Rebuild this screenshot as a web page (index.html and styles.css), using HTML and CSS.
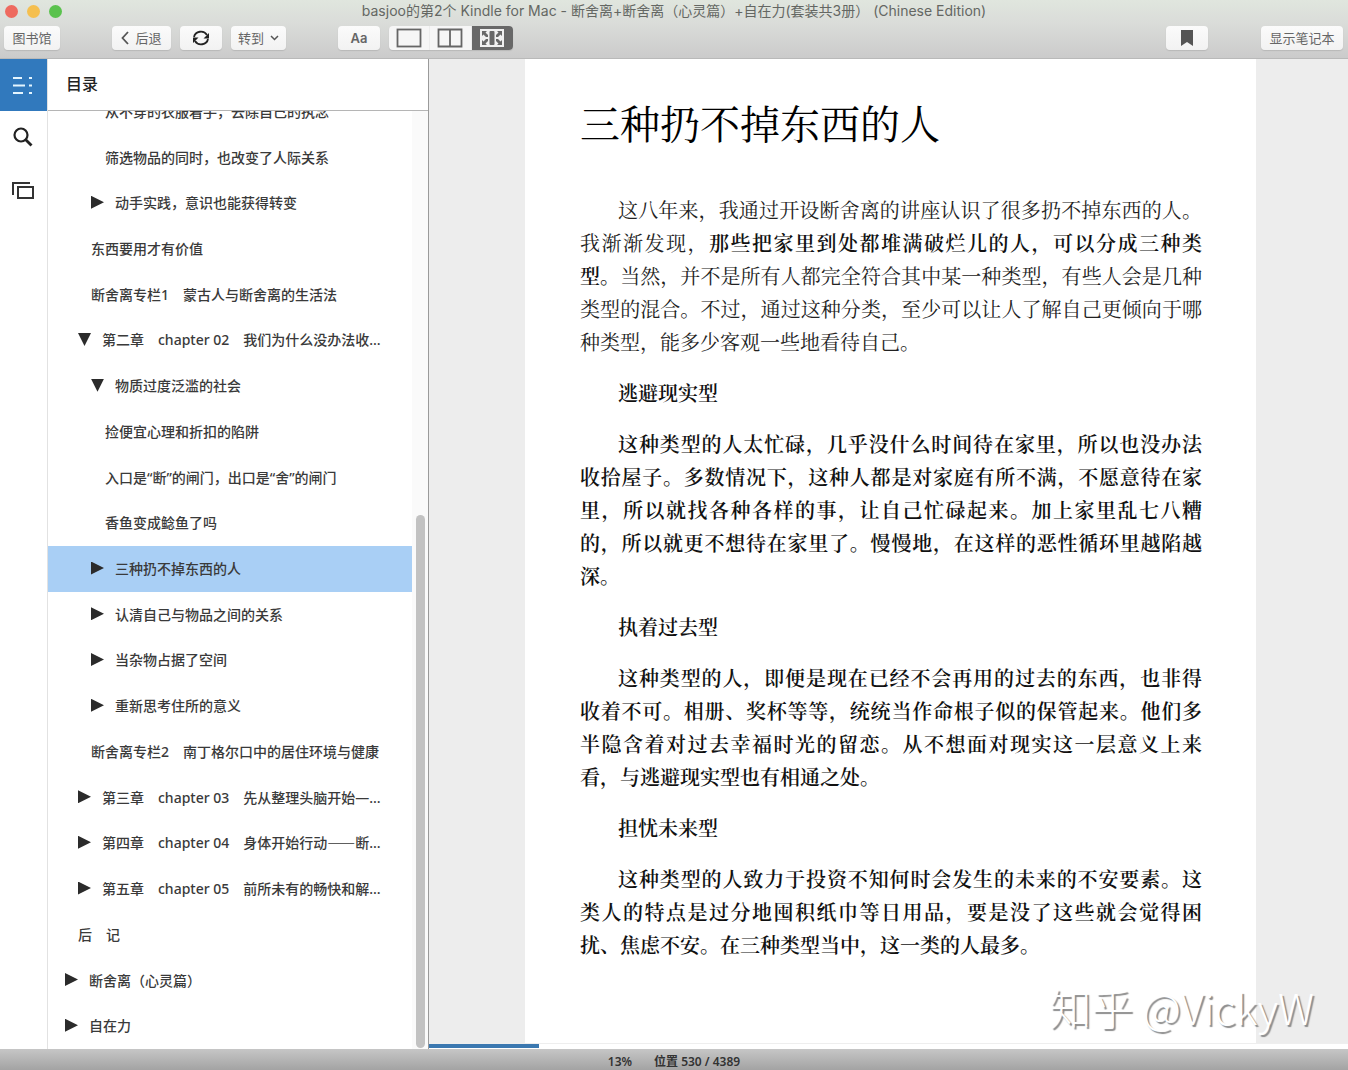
FILE: index.html
```html
<!DOCTYPE html>
<html lang="zh-CN">
<head>
<meta charset="utf-8">
<meta name="viewport" content="width=device-width, initial-scale=1">
<title>Kindle for Mac</title>
<link rel="stylesheet" href="styles.css">
</head>
<body>
<div class="app">
  <header class="chrome">
    <div class="titlebar">
      <div class="lights"><span class="light close"></span><span class="light minimise"></span><span class="light zoom"></span></div>
      <div class="window-title">basjoo的第2个 Kindle for Mac - 断舍离+断舍离（心灵篇）+自在力(套装共3册） (Chinese Edition)</div>
    </div>
    <div class="toolbar">
      <button class="btn library">图书馆</button>
      <div class="group nav">
        <button class="btn back"><svg width="8" height="14" viewBox="0 0 8 14"><path d="M7 1 1.500 7 7 13" fill="none" stroke="#555" stroke-width="1.800"/></svg>后退</button>
        <button class="btn square" aria-label="同步"><svg width="18" height="18" viewBox="0 0 18 18"><g fill="none" stroke="#222" stroke-width="1.800"><path d="M2 8A7 6.500 0 0 1 15 6"/><path d="M16 10A7 6.500 0 0 1 3 12"/></g><path d="M17 4v5.500h-5.500zM1 14V8.500h5.500z" fill="#222"/></svg></button>
        <button class="btn goto">转到<svg width="9" height="6" viewBox="0 0 9 6"><path d="M1 1 4.500 4.500 8 1" fill="none" stroke="#555" stroke-width="1.500"/></svg></button>
      </div>
      <div class="group">
        <button class="btn square font">Aa</button>
        <div class="segmented">
          <button class="seg" aria-label="单栏"><svg width="26" height="20" viewBox="0 0 26 20"><rect x="1.500" y="1.500" width="23" height="17" fill="none" stroke="#666" stroke-width="1.800"/></svg></button>
          <button class="seg" aria-label="双栏"><svg width="26" height="20" viewBox="0 0 26 20"><path d="M1.500 1.500h23v17h-23zM13 1v18" fill="none" stroke="#666" stroke-width="1.800"/></svg></button>
          <button class="seg active" aria-label="自动分栏"><svg width="26" height="20" viewBox="0 0 26 20"><rect x="1" y="1" width="24" height="18" fill="#f0f0f0"/><g fill="#686868"><rect x="10.500" y="3" width="5" height="14" rx="1"/><path d="M3 3h5L6.500 4.500 9 7v2H7L4.500 6.500 3 8zM23 3h-5l1.500 1.500L17 7v2h2l2.500-2.500L23 8zM3 17h5l-1.500-1.500L9 13v-2H7l-2.500 2.500L3 12zM23 17h-5l1.500-1.500L17 13v-2h2l2.500 2.500L23 12z"/></g></svg></button>
        </div>
      </div>
      <div class="group right">
        <button class="btn square" aria-label="书签"><svg width="12" height="16" viewBox="0 0 12 16"><path d="M0 0h12v16l-6-4-6 4z" fill="#555"/></svg></button>
        <button class="btn notes">显示笔记本</button>
      </div>
    </div>
  </header>

  <div class="body">
    <nav class="rail">
      <button class="rail-btn active" aria-label="目录"><svg width="22" height="18" viewBox="0 0 22 18"><path d="M1 2h9M1 9.500h12M1 17h10M17 2h3M17 9.500h3M17 17h3" stroke="#e4f5ff" stroke-width="2.200"/></svg></button>
      <button class="rail-btn" aria-label="搜索"><svg width="20" height="20" viewBox="0 0 20 20"><circle cx="8" cy="8" r="6.500" fill="none" stroke="#222" stroke-width="2.200"/><path d="m12.500 12.500 6 6" stroke="#222" stroke-width="2.800"/></svg></button>
      <button class="rail-btn" aria-label="卡片"><svg width="22" height="18" viewBox="0 0 22 18"><path d="M1 14V2h17M6 6h15v11H6z" fill="none" stroke="#333" stroke-width="2"/></svg></button>
    </nav>

    <aside class="sidebar">
      <h2 class="sidebar-title">目录</h2>
      <div class="toc-wrap">
        <div class="toc-clip">
        <ul class="toc">
          <li><a class="l3" href="#">从不穿的衣服着手，去除自己的执念</a></li>
          <li><a class="l3" href="#">筛选物品的同时，也改变了人际关系</a></li>
          <li><a class="l2 closed" href="#">动手实践，意识也能获得转变</a></li>
          <li><a class="l2" href="#">东西要用才有价值</a></li>
          <li><a class="l2" href="#">断舍离专栏1　蒙古人与断舍离的生活法</a></li>
          <li><a class="l1 open" href="#">第二章　chapter 02　我们为什么没办法收…</a></li>
          <li><a class="l2 open" href="#">物质过度泛滥的社会</a></li>
          <li><a class="l3" href="#">捡便宜心理和折扣的陷阱</a></li>
          <li><a class="l3" href="#">入口是“断”的闸门，出口是“舍”的闸门</a></li>
          <li><a class="l3" href="#">香鱼变成鲶鱼了吗</a></li>
          <li><a class="l2 closed current" href="#">三种扔不掉东西的人</a></li>
          <li><a class="l2 closed" href="#">认清自己与物品之间的关系</a></li>
          <li><a class="l2 closed" href="#">当杂物占据了空间</a></li>
          <li><a class="l2 closed" href="#">重新思考住所的意义</a></li>
          <li><a class="l2" href="#">断舍离专栏2　南丁格尔口中的居住环境与健康</a></li>
          <li><a class="l1 closed" href="#">第三章　chapter 03　先从整理头脑开始—…</a></li>
          <li><a class="l1 closed" href="#"><span>第四章　chapter 04　身体开始行动<span class="dash">——</span>断…</span></a></li>
          <li><a class="l1 closed" href="#">第五章　chapter 05　前所未有的畅快和解…</a></li>
          <li><a class="l1" href="#">后　记</a></li>
          <li><a class="l0 closed" href="#">断舍离（心灵篇）</a></li>
          <li><a class="l0 closed" href="#">自在力</a></li>
        </ul>
        </div>
        <div class="scrollbar"><span class="thumb"></span></div>
      </div>
    </aside>

    <main class="reader">
      <div class="spread">
        <article class="page">
          <h1>三种扔不掉东西的人</h1>
          <p><span class="line first">这八年来，我通过开设断舍离的讲座认识了很多扔不掉东西的人。</span><span class="line">我渐渐发现，<b>那些把家里到处都堆满破烂儿的人，可以分成三种类</b></span><span class="line"><b>型。</b>当然，并不是所有人都完全符合其中某一种类型，有些人会是几种</span><span class="line">类型的混合。不过，通过这种分类，至少可以让人了解自己更倾向于哪</span><span class="line last">种类型，能多少客观一些地看待自己。</span></p>
          <h3>逃避现实型</h3>
          <p class="strong"><span class="line first">这种类型的人太忙碌，几乎没什么时间待在家里，所以也没办法</span><span class="line">收拾屋子。多数情况下，这种人都是对家庭有所不满，不愿意待在家</span><span class="line">里，所以就找各种各样的事，让自己忙碌起来。加上家里乱七八糟</span><span class="line">的，所以就更不想待在家里了。慢慢地，在这样的恶性循环里越陷越</span><span class="line last">深。</span></p>
          <h3>执着过去型</h3>
          <p class="strong"><span class="line first">这种类型的人，即便是现在已经不会再用的过去的东西，也非得</span><span class="line">收着不可。相册、奖杯等等，统统当作命根子似的保管起来。他们多</span><span class="line">半隐含着对过去幸福时光的留恋。从不想面对现实这一层意义上来</span><span class="line last">看，与逃避现实型也有相通之处。</span></p>
          <h3>担忧未来型</h3>
          <p class="strong"><span class="line first">这种类型的人致力于投资不知何时会发生的未来的不安要素。这</span><span class="line">类人的特点是过分地囤积纸巾等日用品，要是没了这些就会觉得困</span><span class="line last">扰、焦虑不安。在三种类型当中，这一类的人最多。</span></p>
        </article>
      </div>
      <div class="progress"><span class="progress-fill"></span></div>
      <div class="watermark">知乎 @VickyW</div>
    </main>
  </div>

  <footer class="status"><span>13%</span><span>位置 530 / 4389</span></footer>
</div>
</body>
</html>
```
FILE: styles.css
```css
* { box-sizing: border-box; }

body {
  margin: 0;
  font-family: "Noto Sans", "Noto Sans CJK SC", sans-serif;
  color: #333;
}

button {
  border: 0;
  padding: 0;
  font: inherit;
  color: inherit;
}

.app {
  display: flex;
  flex-direction: column;
  height: 100vh;
  min-height: 1000px;
  background: #fff;
}

/* window chrome */
.chrome {
  flex: none;
  height: 59px;
  background: linear-gradient(#e0e6de, #dadcd9 40%, #cbcbcb);
  border-bottom: 1px solid #b9b9b9;
  font-family: Inter, "Noto Sans CJK SC", sans-serif;
}

.titlebar {
  display: grid;
  grid-template-columns: 1fr auto 1fr;
  align-items: center;
  height: 22px;
  padding: 0 5px;
}

.lights { display: flex; gap: 9px; }
.light { width: 13px; height: 13px; border-radius: 50%; }
.close { background: #ee6a5f; }
.minimise { background: #f5bf4f; }
.zoom { background: #5ac24d; }

.window-title {
  font-size: 14px;
  line-height: 22px;
  color: #646763;
  white-space: nowrap;
}

.toolbar {
  display: flex;
  align-items: center;
  gap: 52px;
  padding: 4px 5px 0 4px;
}

.group { display: flex; gap: 9px; }
.right { margin-left: auto; gap: 53px; }

.btn {
  display: flex;
  align-items: center;
  justify-content: center;
  gap: 6px;
  height: 24px;
  border-radius: 4px;
  background: linear-gradient(#fbfbfb, #f2f2f2);
  box-shadow: 0 1px 1px #b8b8b8;
  font-size: 13px;
  line-height: 24px;
  color: #666;
  white-space: nowrap;
}

.library { width: 56px; }
.back { width: 59px; }
.square { width: 42px; }
.goto { width: 55px; }
.notes { width: 82px; }
.font { font-weight: 600; }

.segmented {
  display: grid;
  grid-template-columns: repeat(3, 1fr);
  width: 124px;
  height: 24px;
  border-radius: 4px;
  overflow: hidden;
  background: #f6f6f6;
  box-shadow: 0 1px 1px #b8b8b8;
}

.seg {
  display: flex;
  align-items: center;
  justify-content: center;
  background: none;
  border-right: 1px solid #ececec;
}

.seg.active { background: #686868; border: 0; }

/* main area */
.body {
  flex: 1;
  min-height: 0;
  display: grid;
  grid-template-columns: 48px 381px 1fr;
}

.rail { border-right: 1px solid #e2e2e2; }

.rail-btn {
  display: flex;
  align-items: center;
  justify-content: center;
  width: 100%;
  height: 53px;
  padding: 0 2px 2px 0;
  background: none;
}

.rail-btn.active { height: 52px; padding-bottom: 0; background: #3179bd; }

.sidebar {
  display: flex;
  flex-direction: column;
  min-height: 0;
  border-right: 1px solid #9a9a9a;
}

.sidebar-title {
  flex: none;
  margin: 0;
  height: 52px;
  padding-left: 18px;
  border-bottom: 1px solid #b5b5b5;
  font-size: 16px;
  font-weight: 500;
  line-height: 50px;
  color: #222;
}

.toc-wrap {
  flex: 1;
  min-height: 0;
  display: grid;
  grid-template-columns: 1fr 16px;
}

.toc-clip {
  display: flex;
  min-height: 0;
  overflow: hidden;
}

/* scrolled part-way: the first row is half under the heading */
.toc {
  flex: 1;
  display: flex;
  flex-direction: column;
  min-width: 0;
  margin: -22px 0 0;
  padding: 0;
  list-style: none;
}

.toc li { flex: 1; display: flex; min-height: 0; }

.toc a {
  flex: 1;
  display: flex;
  align-items: center;
  gap: 11px;
  padding-bottom: 2px;
  font-size: 14px;
  font-weight: 500;
  color: #3a3a3a;
  text-decoration: none;
  white-space: nowrap;
}

.l0 { padding-left: 17px; }
.l1 { padding-left: 30px; }
.l2 { padding-left: 43px; }
.l3 { padding-left: 57px; }

.dash { font-family: "Noto Sans CJK SC", sans-serif; }

.closed::before,
.open::before {
  content: "";
  width: 13px;
  height: 13px;
  background: #2b2b2b;
}

.closed::before { clip-path: polygon(0 0, 100% 50%, 0 100%); }
.open::before { clip-path: polygon(0 0, 100% 0, 50% 100%); }

.current { background: #a9cff5; }

.scrollbar {
  display: grid;
  grid-template-rows: 404fr 534fr;
  padding: 0 3px 1px 4px;
  background: #fafafa;
}

.thumb {
  grid-row: 2;
  border-radius: 5px;
  background: #c2c2c2;
}

/* reading pane */
.reader {
  position: relative;
  display: flex;
  flex-direction: column;
  min-width: 0;
  background: #ededed;
}

.spread {
  flex: 1;
  display: grid;
  grid-template-columns: 96px 1fr 92px;
}

.page {
  grid-column: 2;
  padding: 35px 54px 0 55px;
  background: #fff;
  font-family: "Noto Serif CJK SC", "Noto Sans CJK SC", serif;
  font-size: 20px;
  line-height: 33px;
  color: #222;
}

.page h1 {
  margin: 0 0 43px;
  font-size: 40px;
  font-weight: 400;
  line-height: 56px;
  color: #000;
}

.page h3 {
  margin: 0 0 18px;
  padding-left: 38px;
  font-size: 20px;
  font-weight: 600;
  line-height: 33px;
  color: #111;
}

.page p { margin: 0 0 18px; font-weight: 400; }
.page b, .page .strong { font-weight: 600; color: #111; }

.line {
  display: block;
  text-align: justify;
  text-align-last: justify;
  white-space: nowrap;
}

.line.first { padding-left: 38px; }
.line.last { text-align-last: left; }

.progress {
  flex: none;
  height: 6px;
  padding-bottom: 1px;
  background: #fff;
  border-top: 1px solid #eee;
}

.progress-fill {
  display: block;
  width: 12%;
  height: 4px;
  background: #3b78b0;
}

.watermark {
  position: absolute;
  right: 34px;
  bottom: 12px;
  font-family: "Noto Sans CJK SC", sans-serif;
  font-size: 42px;
  font-weight: 300;
  line-height: 60px;
  color: #fff;
  text-shadow: 2px 2px 1px #8c8c8c;
  white-space: nowrap;
}

.status {
  flex: none;
  display: flex;
  align-items: center;
  justify-content: center;
  gap: 22px;
  height: 21px;
  padding-top: 4px;
  background: linear-gradient(#c6c6c6, #a3a3a3);
  font-size: 12px;
  font-weight: 600;
  line-height: 17px;
  color: #333;
}
```
